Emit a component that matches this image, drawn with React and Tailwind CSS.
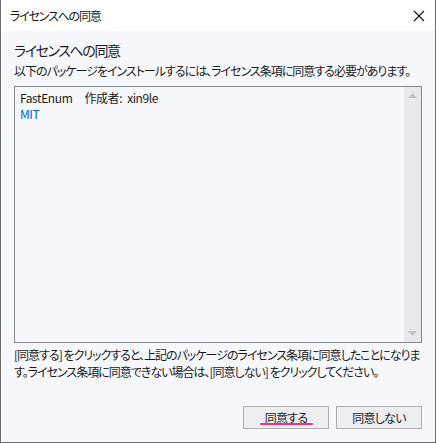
export default function App() {
  return (
    <div
      className="w-[436px] h-[443px] flex flex-col border-x border-b border-[#6e6e6e] bg-[#f7f8fd] text-[#1a1a1a] [font-feature-settings:'palt']"
      style={{ fontFamily: '"Noto Sans CJK JP", "Noto Sans", sans-serif' }}
    >
      {/* Title bar */}
      <div className="h-[31px] shrink-0 bg-white flex items-center justify-between pl-[9px] pr-[8px]">
        <span className="text-[12px] leading-none tracking-[-1.2px]">ライセンスへの同意</span>
        <svg width="12" height="12" viewBox="0 0 12 12" className="mr-[2px]">
          <path d="M1 1 L11 11 M11 1 L1 11" stroke="#111" strokeWidth="1.1" fill="none" />
        </svg>
      </div>

      {/* Body */}
      <div className="flex-1 flex flex-col px-[13px] pt-[9px]">
        <h1 className="text-[14px] leading-[20px] font-normal tracking-[-1.4px]">ライセンスへの同意</h1>
        <p className="text-[12px] leading-[16px] mt-[3px] whitespace-nowrap tracking-[-1px]">
          以下のパッケージをインストールするには、ライセンス条項に同意する必要があります。
        </p>

        <div className="mt-[7px] h-[257px] shrink-0 border border-[#828790] bg-[#f7f8fd] flex">
          <div className="flex-1 pl-[5px] pt-[3px] text-[12px] leading-[16px] tracking-[-0.4px]">
            <div>
              FastEnum<span className="ml-[12px]">作成者:</span>
              <span className="ml-[5px]">xin9le</span>
            </div>
            <div className="text-[#0066cc]">MIT</div>
          </div>
          <div className="w-[17px] bg-[#e9e9ed] flex flex-col justify-between items-center py-[6px]">
            <svg width="9" height="5" viewBox="0 0 9 5">
              <path d="M0 5 L4.5 0 L9 5 Z" fill="#c2c3c9" />
            </svg>
            <svg width="9" height="5" viewBox="0 0 9 5">
              <path d="M0 0 L4.5 5 L9 0 Z" fill="#c2c3c9" />
            </svg>
          </div>
        </div>

        <p className="mt-[3px] text-[12px] leading-[17px] tracking-[-1px]">
          [同意する] をクリックすると、上記のパッケージのライセンス条項に同意したことになります。ライセンス条項に同意できない場合は、[同意しない] をクリックしてください。
        </p>

        <div className="mt-auto mb-[13px] flex justify-end gap-[7px]">
          <button className="relative w-[86px] h-[23px] border border-[#adadad] bg-[#ededf2] text-[12px] leading-none tracking-[-0.8px]">
            同意する
            <span className="absolute left-[16px] right-[15px] bottom-[3px] h-[2px] rounded-full bg-[#f5327d]" />
          </button>
          <button className="w-[86px] h-[23px] border border-[#adadad] bg-[#ededf2] text-[12px] leading-none tracking-[-0.8px]">
            同意しない
          </button>
        </div>
      </div>
    </div>
  );
}
